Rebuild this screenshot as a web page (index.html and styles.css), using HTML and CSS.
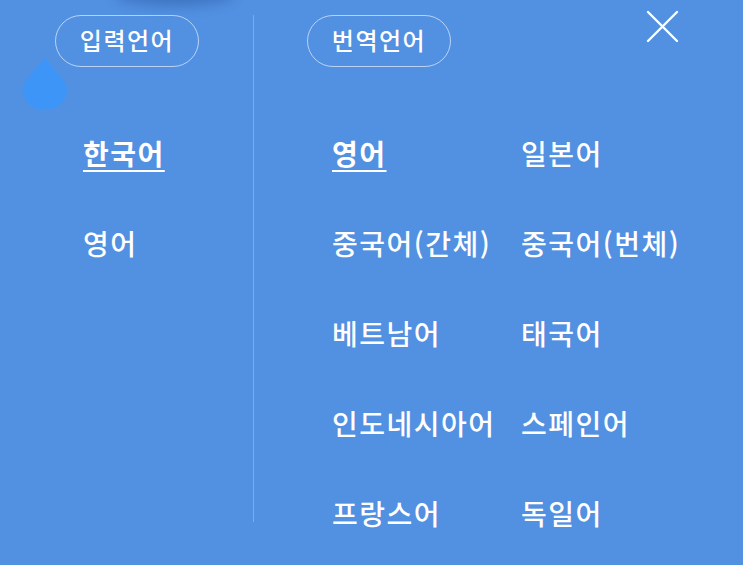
FILE: index.html
```html
<!DOCTYPE html>
<html lang="ko">
<head>
<meta charset="utf-8">
<link rel="stylesheet" href="styles.css">
</head>
<body>
<div class="top-shadow"></div>
<svg class="drop" width="46" height="54" viewBox="0 0 46 54"><path d="M23 1 C30 10 45 24 45 33 C45 45 35 53 23 53 C11 53 1 45 1 33 C1 24 16 10 23 1 Z" fill="#3d96f7"/></svg>
<div class="panel">
  <section class="col-left">
    <div class="pill">입력언어</div>
    <ul class="list-left">
      <li class="item active">한국어</li>
      <li class="item">영어</li>
    </ul>
  </section>
  <div class="divider"></div>
  <section class="col-right">
    <div class="header">
      <div class="pill">번역언어</div>
      <button class="close" aria-label="닫기">
        <svg width="33" height="33" viewBox="0 0 33 33"><path d="M2 2 L31 31 M31 2 L2 31" stroke="#fff" stroke-width="2.4" stroke-linecap="round"/></svg>
      </button>
    </div>
    <ul class="list-right">
      <li class="item active">영어</li>
      <li class="item">일본어</li>
      <li class="item">중국어(간체)</li>
      <li class="item">중국어(번체)</li>
      <li class="item">베트남어</li>
      <li class="item">태국어</li>
      <li class="item">인도네시아어</li>
      <li class="item">스페인어</li>
      <li class="item">프랑스어</li>
      <li class="item">독일어</li>
    </ul>
  </section>
</div>
</body>
</html>
```
FILE: styles.css
```css
html, body {
  margin: 0;
  padding: 0;
}
body {
  width: 743px;
  height: 565px;
  overflow: hidden;
  background: #5290e1;
  font-family: "Noto Sans CJK KR", "Noto Sans", sans-serif;
  color: #fff;
  position: relative;
}
.top-shadow {
  position: absolute;
  left: 120px;
  top: -14px;
  width: 110px;
  height: 14px;
  border-radius: 50%;
  box-shadow: 0 2px 12px 4px rgba(30, 70, 140, 0.35);
  background: #4a84d2;
}
.drop {
  position: absolute;
  left: 22px;
  top: 57px;
}
.panel {
  display: flex;
  height: 565px;
}
.col-left {
  flex: 0 0 253px;
  width: 253px;
  padding-left: 55px;
  box-sizing: border-box;
}
.divider {
  flex: 0 0 1px;
  width: 1px;
  margin-top: 15px;
  height: 507px;
  background: #7eaaed;
}
.col-right {
  flex: 1;
  min-width: 0;
  padding-left: 53px;
  padding-right: 64px;
}
.header {
  display: flex;
  justify-content: space-between;
  align-items: flex-start;
}
.pill {
  display: inline-flex;
  align-items: center;
  justify-content: center;
  margin-top: 15px;
  width: 144px;
  height: 52px;
  box-sizing: border-box;
  border: 1px solid rgba(255, 255, 255, 0.6);
  border-radius: 26px;
  font-size: 24px;
  font-weight: 500;
  letter-spacing: 1.5px;
  line-height: 1;
  padding-bottom: 2px;
}
.close {
  margin-top: 10px;
  padding: 0;
  border: 0;
  background: none;
  width: 33px;
  height: 33px;
  display: block;
}
ul {
  list-style: none;
  margin: 0;
  padding: 0;
}
.list-left {
  margin-top: 41px;
  padding-left: 28px;
}
.list-right {
  margin-top: 41px;
  padding-left: 25px;
  display: grid;
  grid-template-columns: 189px 189px;
  grid-auto-rows: 90px;
}
.item {
  height: 90px;
  display: flex;
  align-items: center;
  font-size: 28px;
  font-weight: 500;
  letter-spacing: 1.5px;
  line-height: 1;
  white-space: nowrap;
}
.item.active {
  font-weight: 700;
  text-decoration: underline;
  text-decoration-thickness: 2px;
  text-underline-offset: 5px;
}
```
